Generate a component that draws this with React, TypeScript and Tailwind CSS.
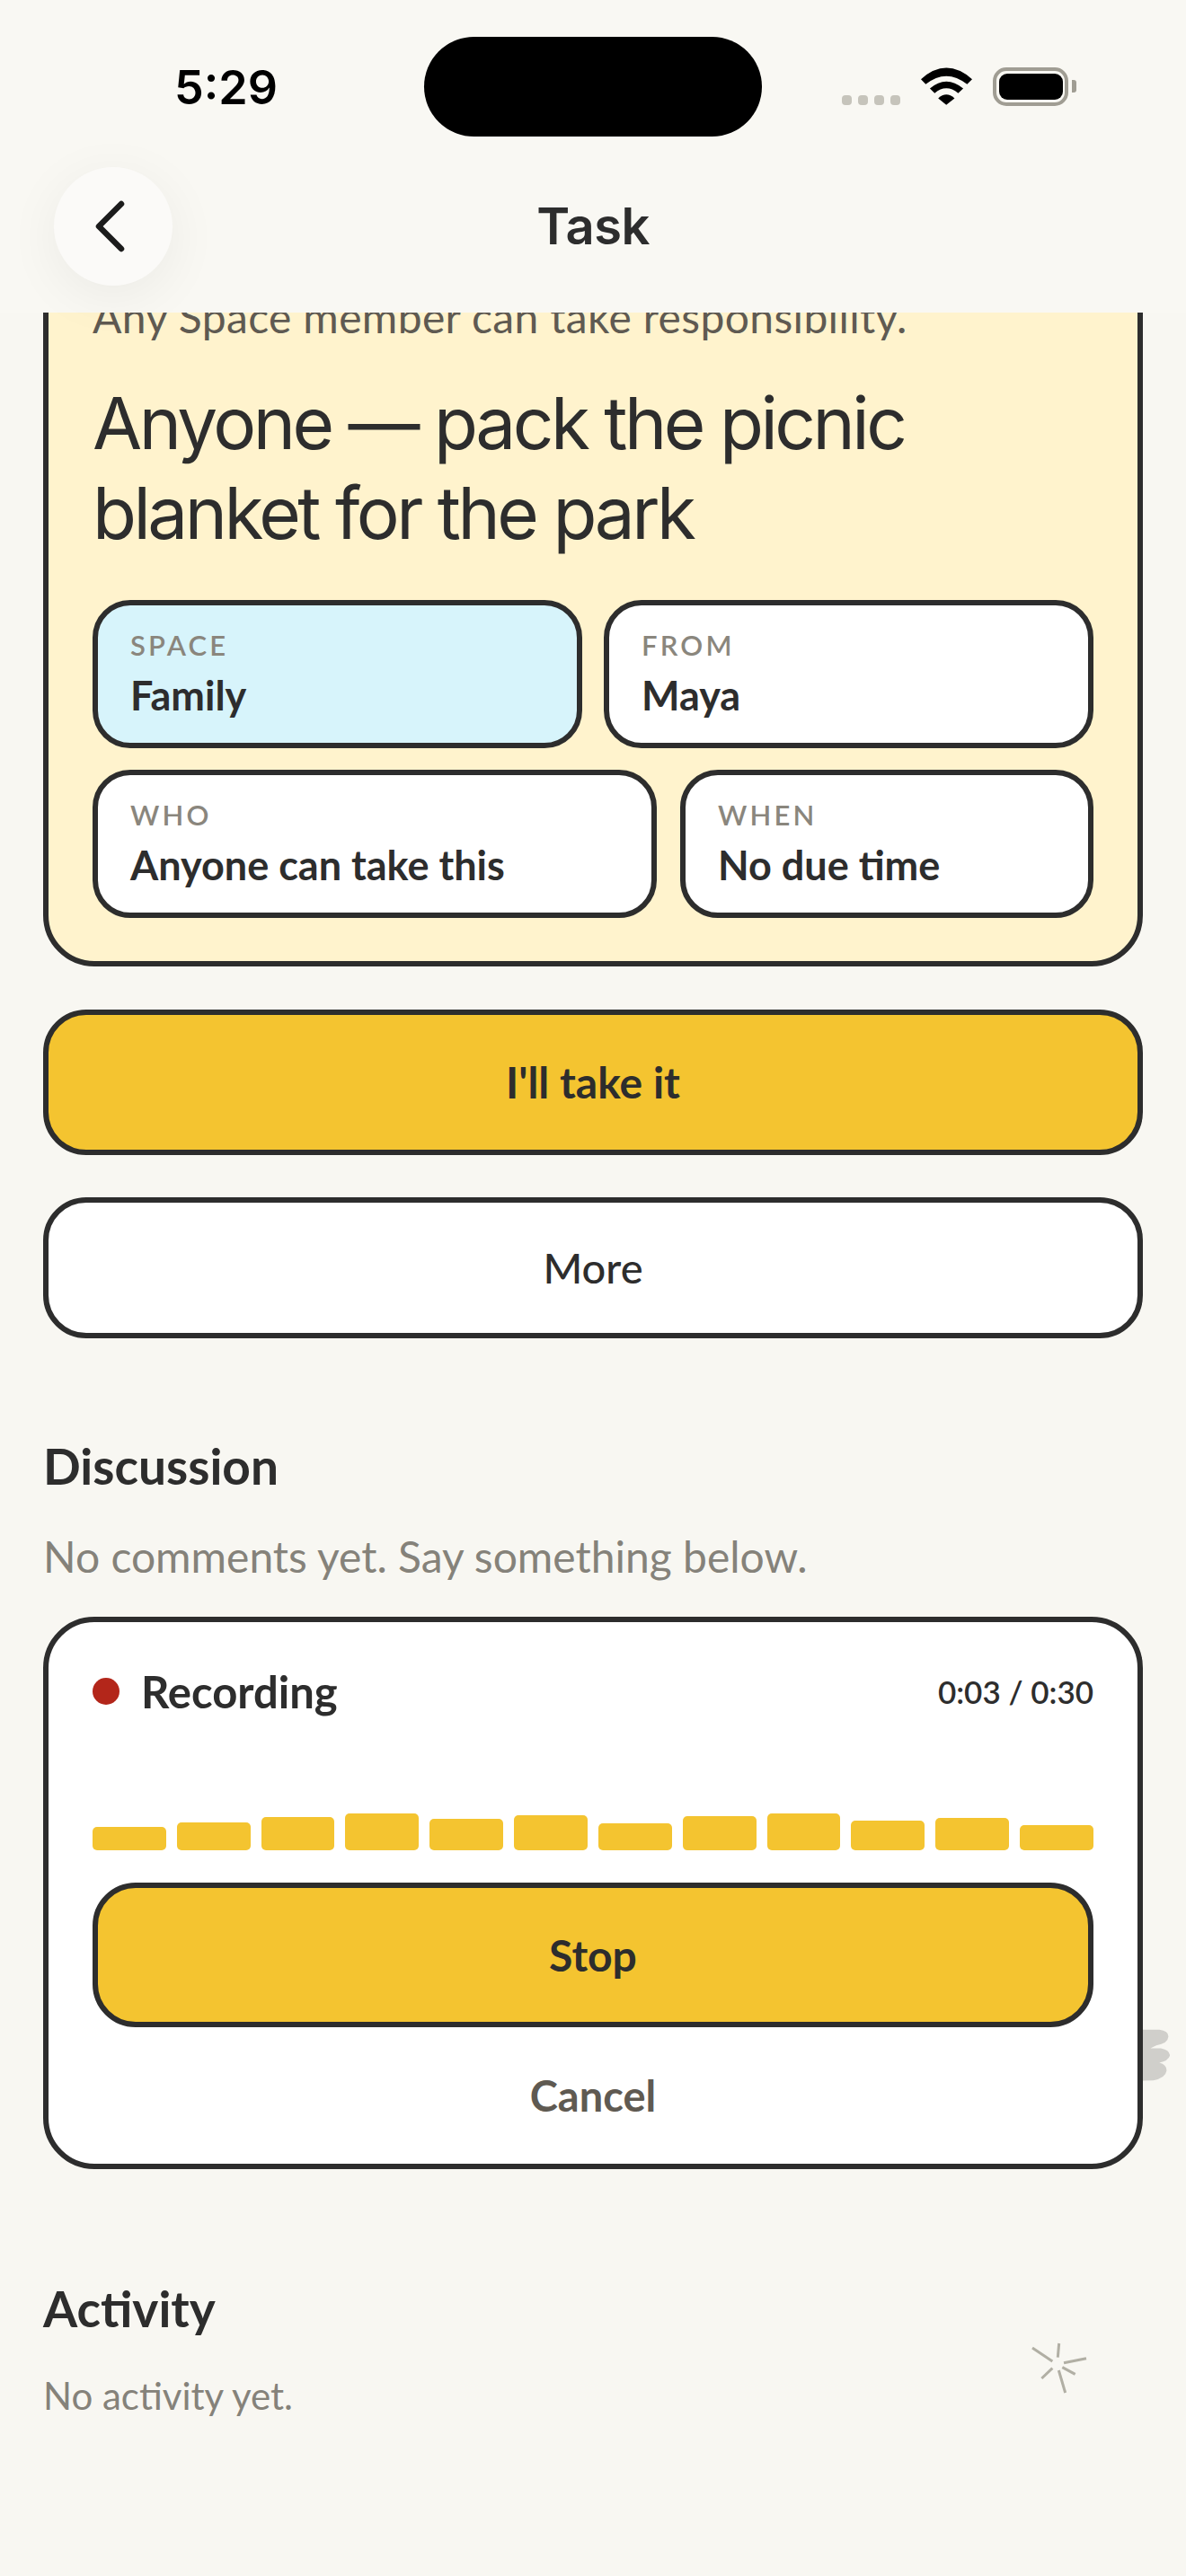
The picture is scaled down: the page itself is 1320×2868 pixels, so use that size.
const bars = [26, 31, 37, 41, 35, 39, 30, 38, 41, 33, 36, 28];

const body = "font-['Lato','Noto_Sans',sans-serif]";

function Chip({ label, value, className }: { label: string; value: string; className: string }) {
  return (
    <div className={`h-[165px] rounded-[42px] border-[6px] border-[#2d2d2d] px-[36px] pt-[24px] ${className}`}>
      <div className="text-[31px] leading-[40px] font-semibold tracking-[3.2px] text-[#8a867d]">{label}</div>
      <div className="mt-[8px] whitespace-nowrap text-[45px] leading-[56px] font-bold text-[#2d2d2d]">{value}</div>
    </div>
  );
}

export default function App() {
  return (
    <div className={`relative flex h-[2868px] w-[1320px] flex-col overflow-hidden bg-[#f8f7f2] ${body}`}>
      <header className="relative z-10 h-[348px] shrink-0 bg-[#f9f8f3]">
        <div className="flex h-[186px] items-start">
          <div className="w-[472px] pt-[66px] pl-[194px] font-['Inter',sans-serif] text-[52px] leading-[64px] font-semibold text-black">5:29</div>
          <div className="mt-[41px] h-[111px] w-[376px] rounded-full bg-black" />
          <div className="ml-[89px] flex items-start pt-[75px]">
            <div className="mt-[31px] flex gap-[7px]">
              <span className="h-[11px] w-[11px] rounded-[4px] bg-[#c6c4bb]" />
              <span className="h-[11px] w-[11px] rounded-[4px] bg-[#c6c4bb]" />
              <span className="h-[11px] w-[11px] rounded-[4px] bg-[#c6c4bb]" />
              <span className="h-[11px] w-[11px] rounded-[4px] bg-[#c6c4bb]" />
            </div>
            <svg className="ml-[23px]" width="57" height="42" viewBox="375 75 172 125">
              <path d="M375 114 Q460 38 547 114 L530 131 Q460 76 391 131 Z" fill="#000" />
              <path d="M405 145 Q460 98 517 145 L500 161 Q460 128 421 161 Z" fill="#000" />
              <path d="M433 178 Q460 153 488 178 L460 200 Z" fill="#000" />
            </svg>
            <div className="ml-[23px] flex h-[43px] w-[84px] items-center justify-center rounded-[15px] border-[4px] border-[#a09d93]">
              <div className="h-[29px] w-[71px] rounded-[9px] bg-black" />
            </div>
            <div className="mt-[14px] ml-[4px] h-[14px] w-[5px] rounded-r-[3px] bg-[#a09d93]" />
          </div>
        </div>
        <div className="relative h-[132px]">
          <button className="absolute top-0 left-[60px] flex h-[132px] w-[132px] items-center justify-center rounded-full bg-[#fbfaf8] shadow-[0_12px_60px_rgba(0,0,0,0.06)]">
            <svg width="40" height="62" viewBox="0 0 40 62" className="mr-[6px]">
              <path d="M32 6 L7 31 L32 56" fill="none" stroke="#1c1c1c" strokeWidth="6.5" strokeLinecap="round" strokeLinejoin="round" />
            </svg>
          </button>
          <div className="flex h-full items-center justify-center font-['Inter',sans-serif] text-[56px] font-semibold tracking-[-0.5px] text-[#2d2d2d]">Task</div>
        </div>
      </header>

      <main className="relative flex-1 overflow-hidden px-[48px]">
        <div className="-mt-[92px]">
          <section className="rounded-[57px] border-[6px] border-[#2d2d2d] bg-[#fff3cd] px-[49px] pt-[61px] pb-[48px]">
            <p className="whitespace-nowrap text-[48px] leading-[60px] tracking-[0.35px] text-[#5f5a52]">Any Space member can take responsibility.</p>
            <h1 className="mt-[38px] font-['Inter',sans-serif] text-[80px] leading-[100px] font-normal tracking-[-3.5px] text-[#2d2d2d]">
              Anyone — pack the picnic
              <br />
              blanket for the park
            </h1>
            <div className="mt-[47px] flex gap-[24px]">
              <Chip label="SPACE" value="Family" className="flex-1 bg-[#d7f4fb]" />
              <Chip label="FROM" value="Maya" className="flex-1 bg-white" />
            </div>
            <div className="mt-[24px] flex gap-[26px]">
              <Chip label="WHO" value="Anyone can take this" className="w-[628px] bg-white" />
              <Chip label="WHEN" value="No due time" className="flex-1 bg-white" />
            </div>
          </section>

          <button className="mt-[48px] h-[162px] w-full rounded-[48px] border-[6px] border-[#2d2d2d] bg-[#f4c430] text-[48px] font-bold text-[#2d2d2d]">I'll take it</button>
          <button className="mt-[47px] h-[157px] w-full rounded-[48px] border-[6px] border-[#2d2d2d] bg-white text-[47px] font-medium text-[#2d2d2d]">More</button>

          <h2 className="mt-[112px] text-[55px] leading-[60px] font-bold text-[#2d2d2d]">Discussion</h2>
          <p className="mt-[41px] text-[48px] leading-[60px] text-[#85827a]">No comments yet. Say something below.</p>

          <section className="relative z-10 mt-[37px] h-[615px] rounded-[57px] border-[6px] border-[#2d2d2d] bg-white px-[49px]">
            <div className="flex items-center justify-between pt-[47px]">
              <div className="flex items-center gap-[24px]">
                <span className="h-[30px] w-[30px] rounded-full bg-[#b3261a]" />
                <span className="text-[49px] leading-[60px] font-bold text-[#2d2d2d]">Recording</span>
              </div>
              <span className="text-[35px] leading-[50px] font-semibold text-[#2d2d2d]">0:03 / 0:30</span>
            </div>
            <div className="mt-[106px] flex h-[41px] items-end gap-[12px]">
              {bars.map((h, i) => (
                <span key={i} className="flex-1 rounded-[5px] bg-[#f4c430]" style={{ height: h }} />
              ))}
            </div>
            <button className="mt-[36px] h-[161px] w-full rounded-[48px] border-[6px] border-[#2d2d2d] bg-[#f4c430] text-[48px] font-bold text-[#2d2d2d]">Stop</button>
            <div className="mt-[47px] text-center text-[47px] leading-[58px] font-bold text-[#5f5a52]">Cancel</div>
          </section>

          <svg className="absolute top-[1910px] left-[1272px]" width="32" height="60" viewBox="515 85 96 175" aria-hidden="true">
            <path d="M510 88 H570 Q602 92 600 112 Q598 135 560 140 L540 150 H575 Q606 156 605 175 Q600 192 570 198 Q596 205 594 226 Q590 250 550 257 L510 258 Z" fill="#d0cfcb" />
          </svg>

          <h2 className="mt-[125px] text-[55px] leading-[60px] font-bold text-[#2d2d2d]">Activity</h2>
          <p className="mt-[37px] text-[42px] leading-[60px] text-[#85827a]">No activity yet.</p>

          <svg className="absolute top-[2256px] left-[1144px]" width="70" height="64" viewBox="130 1110 210 192" aria-hidden="true">
            <g stroke="#b1afa4" strokeWidth="9" fill="none">
              <path d="M145 1140 L212 1185" />
              <path d="M234 1125 L230 1172" />
              <path d="M325 1175 L250 1190" />
              <path d="M245 1205 L288 1228" />
              <path d="M233 1215 L255 1290" />
              <path d="M212 1208 L176 1242" />
            </g>
          </svg>
        </div>
      </main>
    </div>
  );
}
